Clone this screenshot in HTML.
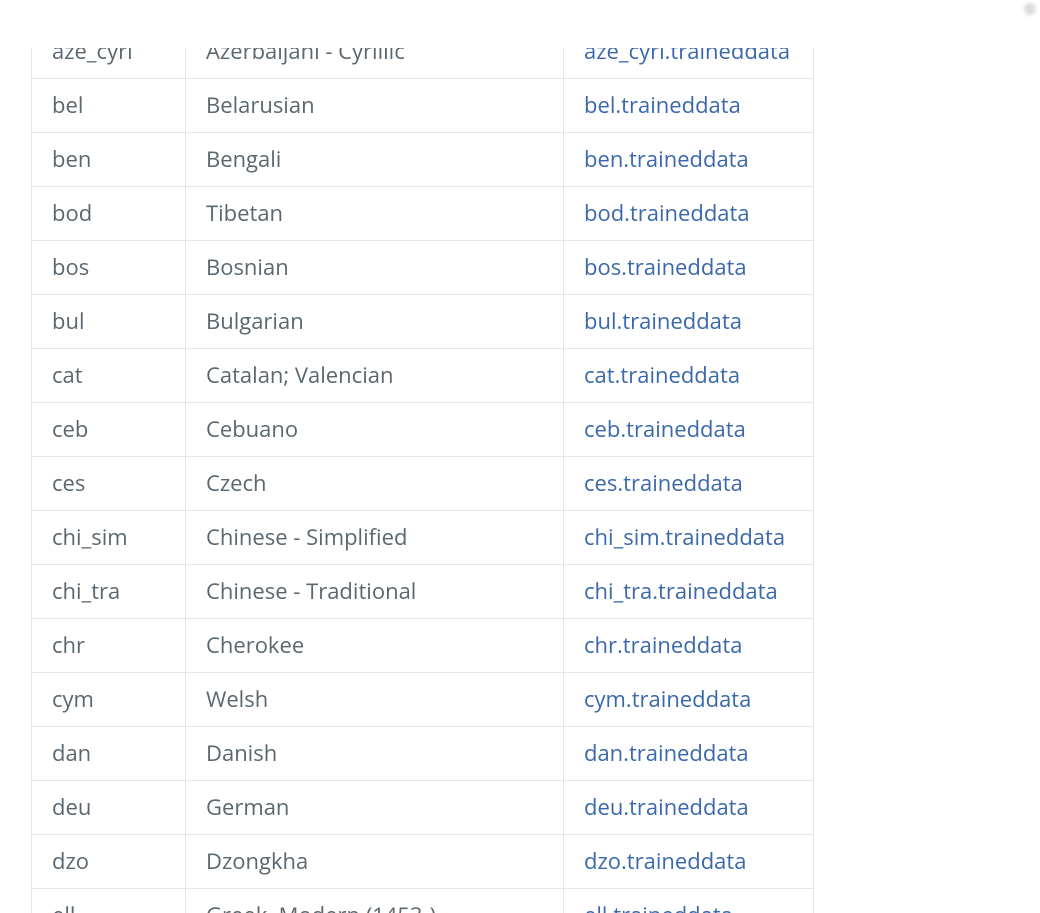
<!DOCTYPE html>
<html><head><meta charset="utf-8"><style>
html,body{margin:0;padding:0;background:#fff;width:1040px;height:913px;overflow:hidden;}
.clip{position:absolute;left:0;top:48px;width:1040px;height:865px;overflow:hidden;}
table{position:absolute;left:31px;top:-24px;border-collapse:collapse;font-family:"Open Sans","Liberation Sans",sans-serif;font-size:22px;color:#5b6770;}
td{height:53px;border:1px solid #e6e6e6;padding:0 0 1px 20px;box-sizing:border-box;vertical-align:middle;white-space:nowrap;}
td:nth-child(1){width:154px;}
td:nth-child(2){width:378px;}
td:nth-child(3){width:250px;color:#3a68aa;}
tr{height:54px;}
.dot{position:absolute;left:1024px;top:3px;width:12px;height:12px;border-radius:50%;background:#ddd;filter:blur(1.5px);}
</style></head><body>
<div class="dot"></div>
<div class="clip"><table>
<tr><td>aze_cyrl</td><td>Azerbaijani - Cyrillic</td><td>aze_cyrl.traineddata</td></tr>
<tr><td>bel</td><td>Belarusian</td><td>bel.traineddata</td></tr>
<tr><td>ben</td><td>Bengali</td><td>ben.traineddata</td></tr>
<tr><td>bod</td><td>Tibetan</td><td>bod.traineddata</td></tr>
<tr><td>bos</td><td>Bosnian</td><td>bos.traineddata</td></tr>
<tr><td>bul</td><td>Bulgarian</td><td>bul.traineddata</td></tr>
<tr><td>cat</td><td>Catalan; Valencian</td><td>cat.traineddata</td></tr>
<tr><td>ceb</td><td>Cebuano</td><td>ceb.traineddata</td></tr>
<tr><td>ces</td><td>Czech</td><td>ces.traineddata</td></tr>
<tr><td>chi_sim</td><td>Chinese - Simplified</td><td>chi_sim.traineddata</td></tr>
<tr><td>chi_tra</td><td>Chinese - Traditional</td><td>chi_tra.traineddata</td></tr>
<tr><td>chr</td><td>Cherokee</td><td>chr.traineddata</td></tr>
<tr><td>cym</td><td>Welsh</td><td>cym.traineddata</td></tr>
<tr><td>dan</td><td>Danish</td><td>dan.traineddata</td></tr>
<tr><td>deu</td><td>German</td><td>deu.traineddata</td></tr>
<tr><td>dzo</td><td>Dzongkha</td><td>dzo.traineddata</td></tr>
<tr><td>ell</td><td>Greek, Modern (1453-)</td><td>ell.traineddata</td></tr>
</table></div>
</body></html>
